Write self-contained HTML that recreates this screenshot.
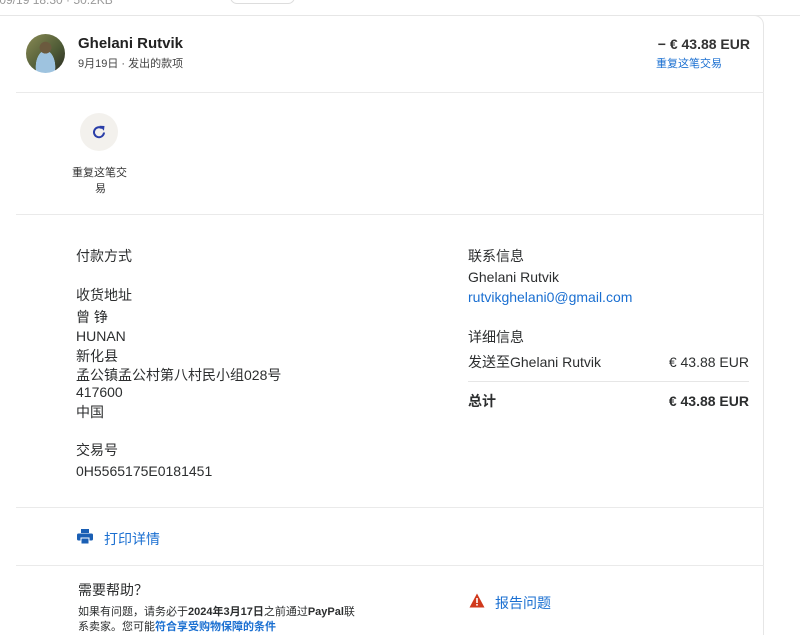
<!DOCTYPE html>
<html><head><meta charset="utf-8">
<style>
*{margin:0;padding:0;box-sizing:border-box}
html{overflow:hidden;height:635px}
body{width:800px;height:635px;background:#fff;font-family:"Liberation Sans","Noto Sans CJK SC",sans-serif;color:#2c2e2f;position:relative;overflow:hidden}
.a{position:absolute;white-space:nowrap}
.card{position:absolute;left:16px;top:15px;width:748px;height:620px;border:1px solid #e6e6e6;border-bottom:none;border-left:none;border-top-right-radius:10px}
.hr{position:absolute;left:16px;height:1px;background:#eaeaea}
.blue{color:#1a6fd1}
.s14{font-size:14px}
</style></head><body>
<div class="a" style="left:-4px;top:-8px;font-size:12px;color:#999;line-height:16px">/09/19 18:30 · 50.2KB</div>
<div class="a" style="left:230px;top:-10px;width:65px;height:14px;border:1px solid #ddd;border-radius:8px"></div>
<div class="a" style="left:0;top:15px;width:800px;height:1px;background:#e6e6e6"></div>
<div class="card"></div>

<div class="a" style="left:26px;top:34px;width:39px;height:39px;border-radius:50%;background:radial-gradient(circle at 50% 35%,#6b5a3e 0 18%,transparent 19%),radial-gradient(ellipse at 50% 85%,#9ec3df 0 35%,transparent 36%),linear-gradient(135deg,#8a8a55,#4d5a35 60%,#2a2a22)"></div>
<div class="a" style="left:78px;top:35px;font-size:15px;font-weight:bold;color:#222">Ghelani Rutvik</div>
<div class="a" style="left:78px;top:55px;font-size:11px;color:#444">9月19日 · 发出的款项</div>
<div class="a" style="right:50px;top:36px;font-size:14px;font-weight:bold;color:#333">− € 43.88 EUR</div>
<div class="a blue" style="left:656px;top:55px;font-size:11px">重复这笔交易</div>

<div class="hr" style="top:92px;width:748px"></div>

<div class="a" style="left:80px;top:113px;width:38px;height:38px;border-radius:50%;background:#f3f1ed"></div>
<svg class="a" style="left:91px;top:124px" width="16" height="16" viewBox="0 0 16 16"><path d="M13 8.5A5 5 0 1 1 11 4.2" fill="none" stroke="#2a3ea8" stroke-width="2"/><path d="M8.5 1.8l5 .2-.6 4.8z" fill="#2a3ea8"/></svg>
<div class="a" style="left:72px;top:164px;font-size:11px;color:#333">重复这笔交</div>
<div class="a" style="left:95px;top:180px;font-size:11px;color:#333">易</div>

<div class="hr" style="top:214px;width:748px"></div>

<div class="a s14" style="left:76px;top:246px">付款方式</div>
<div class="a s14" style="left:76px;top:285px">收货地址</div>
<div class="a s14" style="left:76px;top:307px">曾 铮</div>
<div class="a s14" style="left:76px;top:328px">HUNAN</div>
<div class="a s14" style="left:76px;top:346px">新化县</div>
<div class="a s14" style="left:76px;top:365px">孟公镇孟公村第八村民小组028号</div>
<div class="a s14" style="left:76px;top:384px">417600</div>
<div class="a s14" style="left:76px;top:402px">中国</div>
<div class="a s14" style="left:76px;top:440px">交易号</div>
<div class="a s14" style="left:76px;top:463px">0H5565175E0181451</div>

<div class="a s14" style="left:468px;top:246px">联系信息</div>
<div class="a s14" style="left:468px;top:269px">Ghelani Rutvik</div>
<div class="a s14 blue" style="left:468px;top:289px">rutvikghelani0@gmail.com</div>
<div class="a s14" style="left:468px;top:327px">详细信息</div>
<div class="a s14" style="left:468px;top:352px">发送至Ghelani Rutvik</div>
<div class="a s14" style="right:51px;top:354px">€ 43.88 EUR</div>
<div class="a" style="left:468px;top:381px;width:281px;height:1px;background:#e6e6e6"></div>
<div class="a s14" style="left:468px;top:391px;font-weight:bold">总计</div>
<div class="a s14" style="right:51px;top:393px;font-weight:bold">€ 43.88 EUR</div>

<div class="hr" style="top:507px;width:748px"></div>

<svg class="a" style="left:77px;top:529px" width="16" height="15" viewBox="0 0 16 15"><rect x="4" y="0" width="8" height="4" fill="#1a5fb4"/><rect x="0" y="4.5" width="16" height="7" rx="1.5" fill="#1a5fb4"/><rect x="4" y="9" width="8" height="6" fill="#1a5fb4" stroke="#fff" stroke-width="1"/></svg>
<div class="a blue" style="left:104px;top:529px;font-size:14px">打印详情</div>

<div class="hr" style="top:565px;width:748px"></div>

<div class="a s14" style="left:78px;top:580px">需要帮助？</div>
<div class="a" style="left:78px;top:603px;font-size:11px">如果有问题，请务必于<b>2024年3月17日</b>之前通过<b>PayPal</b>联</div>
<div class="a" style="left:78px;top:618px;font-size:11px">系卖家。您可能<b class="blue">符合享受购物保障的条件</b></div>
<svg class="a" style="left:469px;top:593px" width="16" height="15" viewBox="0 0 16 15"><path d="M8 0.5L15.5 14.5H0.5z" fill="#d0391c"/><rect x="7.2" y="5" width="1.6" height="5" fill="#fff"/><rect x="7.2" y="11" width="1.6" height="1.6" fill="#fff"/></svg>
<div class="a blue" style="left:495px;top:593px;font-size:14px">报告问题</div>
</body></html>
